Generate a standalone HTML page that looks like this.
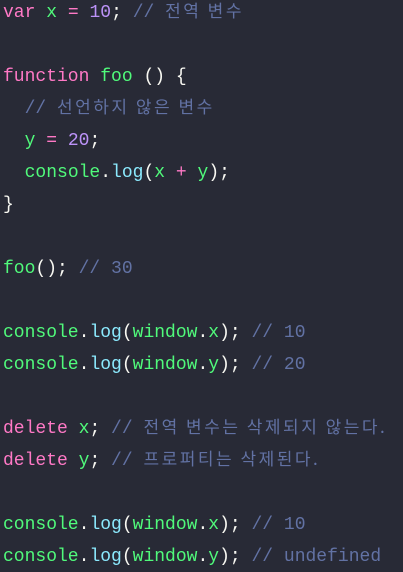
<!DOCTYPE html>
<html><head><meta charset="utf-8"><style>
html,body{margin:0;padding:0;background:#282a36;width:403px;height:572px;overflow:hidden}
.w{padding-left:3px;position:relative;top:-3px;font-family:"Liberation Mono","Noto Sans CJK KR",monospace;font-size:18px;color:#f8f8f2}
.w div{height:32px;line-height:32px;white-space:pre;overflow:visible}
.k{color:#ff79c6}.g{color:#50fa7b}.n{color:#bd93f9}.c{color:#6272a4}.f{color:#8be9fd}
.h{font-family:"Noto Sans CJK KR",sans-serif;font-size:17px;letter-spacing:2.5px;line-height:0;vertical-align:0}
</style></head><body><div class="w">
<div><span class="k">var</span> <span class="g">x</span> <span class="k">=</span> <span class="n">10</span>; <span class="c">// <span class="h">전역 변수</span></span></div>
<div></div>
<div><span class="k">function</span> <span class="g">foo</span> () {</div>
<div>  <span class="c">// <span class="h">선언하지 않은 변수</span></span></div>
<div>  <span class="g">y</span> <span class="k">=</span> <span class="n">20</span>;</div>
<div>  <span class="g">console</span>.<span class="f">log</span>(<span class="g">x</span> <span class="k">+</span> <span class="g">y</span>);</div>
<div>}</div>
<div></div>
<div><span class="g">foo</span>(); <span class="c">// 30</span></div>
<div></div>
<div><span class="g">console</span>.<span class="f">log</span>(<span class="g">window</span>.<span class="g">x</span>); <span class="c">// 10</span></div>
<div><span class="g">console</span>.<span class="f">log</span>(<span class="g">window</span>.<span class="g">y</span>); <span class="c">// 20</span></div>
<div></div>
<div><span class="k">delete</span> <span class="g">x</span>; <span class="c">// <span class="h">전역 변수는 삭제되지 않는다.</span></span></div>
<div><span class="k">delete</span> <span class="g">y</span>; <span class="c">// <span class="h">프로퍼티는 삭제된다.</span></span></div>
<div></div>
<div><span class="g">console</span>.<span class="f">log</span>(<span class="g">window</span>.<span class="g">x</span>); <span class="c">// 10</span></div>
<div><span class="g">console</span>.<span class="f">log</span>(<span class="g">window</span>.<span class="g">y</span>); <span class="c">// undefined</span></div>
</div></body></html>
